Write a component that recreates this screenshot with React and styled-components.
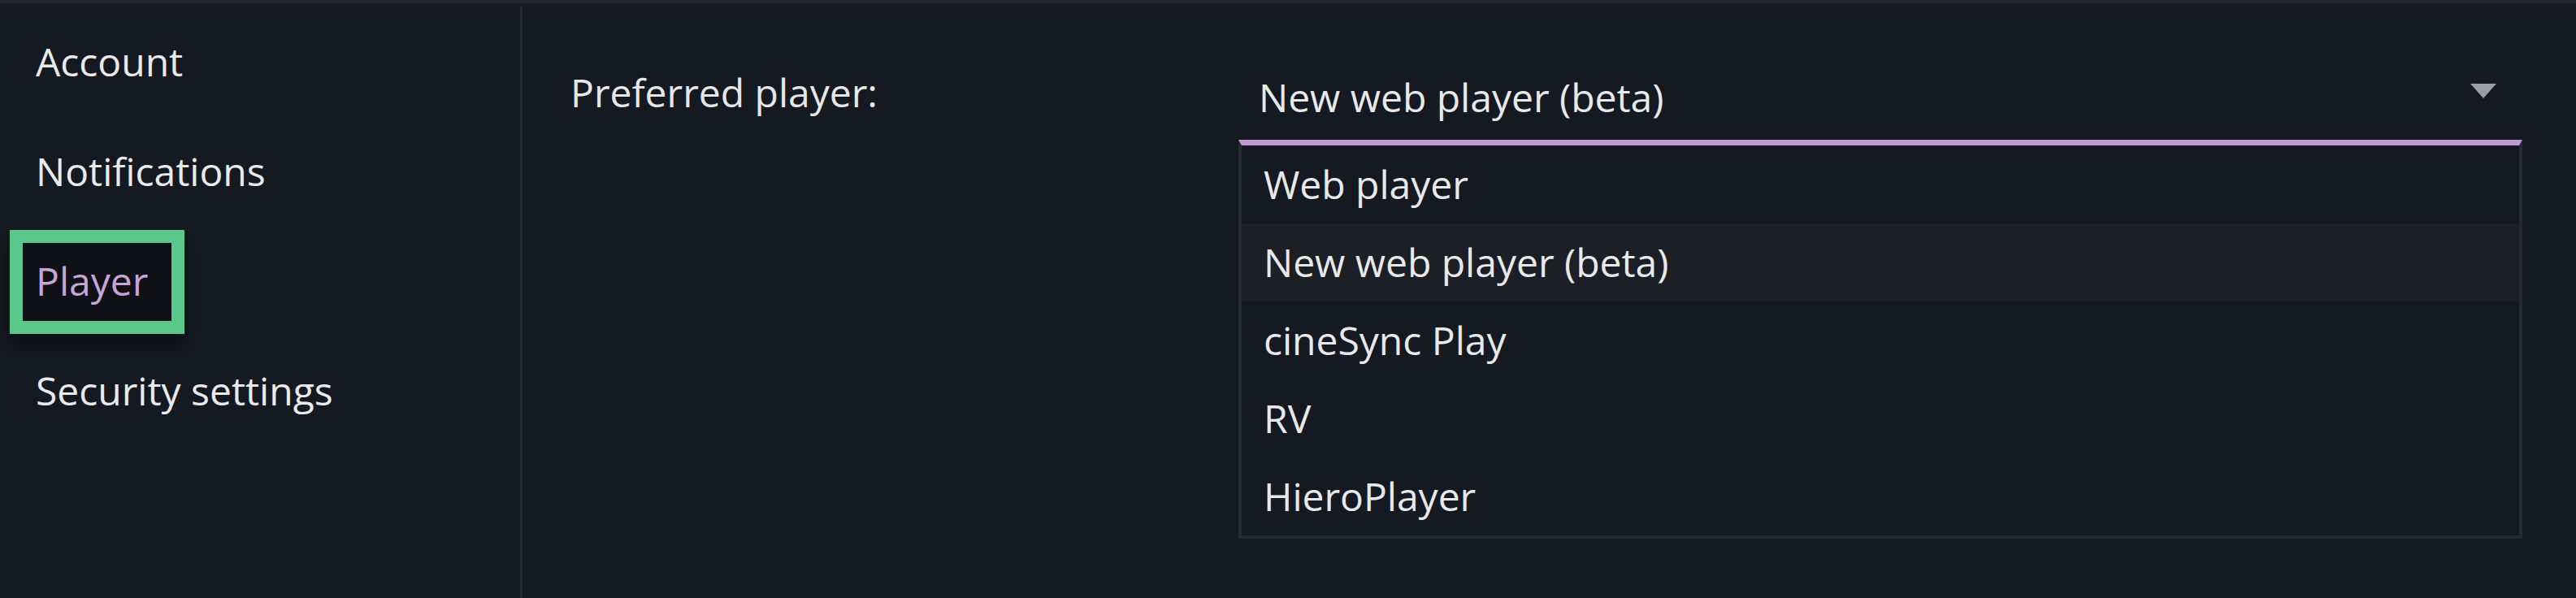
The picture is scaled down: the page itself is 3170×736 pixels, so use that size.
import React from "react";
import styled, { createGlobalStyle } from "styled-components";

const GlobalStyle = createGlobalStyle`
  html, body {
    margin: 0;
    padding: 0;
    background-color: #151921;
  }
  body {
    font-family: "Open Sans", "Noto Sans", sans-serif;
    color: #e8e9eb;
  }
  * {
    box-sizing: border-box;
  }
`;

const TopStrip = styled.div`
  height: 4px;
  background-color: #22262c;
`;

const Layout = styled.div`
  display: flex;
  min-height: calc(100vh - 4px);
`;

const Sidebar = styled.nav`
  width: 643px;
  flex-shrink: 0;
  margin-top: 4px;
  border-right: 3px solid #252930;
  padding: 36px 0 0 44px;
  display: flex;
  flex-direction: column;
  align-items: flex-start;
  gap: 71px;
`;

const NavItem = styled.div`
  font-size: 48px;
  line-height: 64px;
  height: 64px;
  color: #e9eaec;
  white-space: nowrap;

  &[data-active="true"] {
    color: #c6a5d6;
    height: auto;
    margin: -31px 0 -33px -32px;
    padding: 15px 29px 17px 16px;
    border: 16px solid #5bc88b;
    background-color: #0f1116;
    box-shadow: 0 14px 22px rgba(0, 0, 0, 0.45);
  }
`;

const Content = styled.main`
  flex: 1;
  padding: 78px 0 0 59px;
`;

const FieldRow = styled.div`
  display: flex;
  align-items: flex-start;
`;

const Label = styled.div`
  width: 822px;
  flex-shrink: 0;
  font-size: 48px;
  line-height: 64px;
  color: #e6e7e9;
`;

const Select = styled.div`
  width: 1580px;
  display: flex;
  flex-direction: column;
  margin-top: -3px;
`;

const Field = styled.div`
  position: relative;
  padding: 9px 0 20px 25px;
  font-size: 48px;
  line-height: 64px;
  color: #e8e9eb;
`;

const Arrow = styled.span`
  position: absolute;
  right: 32px;
  top: 24px;
  width: 0;
  height: 0;
  border-left: 16px solid transparent;
  border-right: 16px solid transparent;
  border-top: 18px solid #9d9ea1;
`;

const Menu = styled.ul`
  list-style: none;
  margin: 0;
  padding: 0;
  border: 4px solid #262a31;
  border-top: 7px solid #bd9bcf;
`;

const Option = styled.li`
  height: 96px;
  padding: 3px 0 0 27px;
  font-size: 48px;
  line-height: 90px;
  color: #e8e9eb;
  background-color: ${(props) => (props.$hover ? "#1c1f26" : "transparent")};
`;

const navItems = ["Account", "Notifications", "Player", "Security settings"];

const players = [
  "Web player",
  "New web player (beta)",
  "cineSync Play",
  "RV",
  "HieroPlayer",
];

const App = () => {
  return (
    <>
      <GlobalStyle />
      <TopStrip />
      <Layout>
        <Sidebar>
          {navItems.map((item) => (
            <NavItem key={item} data-active={item === "Player"}>
              {item}
            </NavItem>
          ))}
        </Sidebar>
        <Content>
          <FieldRow>
            <Label>Preferred player:</Label>
            <Select>
              <Field>
                New web player (beta)
                <Arrow />
              </Field>
              <Menu>
                {players.map((p) => (
                  <Option key={p} $hover={p === "New web player (beta)"}>
                    {p}
                  </Option>
                ))}
              </Menu>
            </Select>
          </FieldRow>
        </Content>
      </Layout>
    </>
  );
};

export default App;
